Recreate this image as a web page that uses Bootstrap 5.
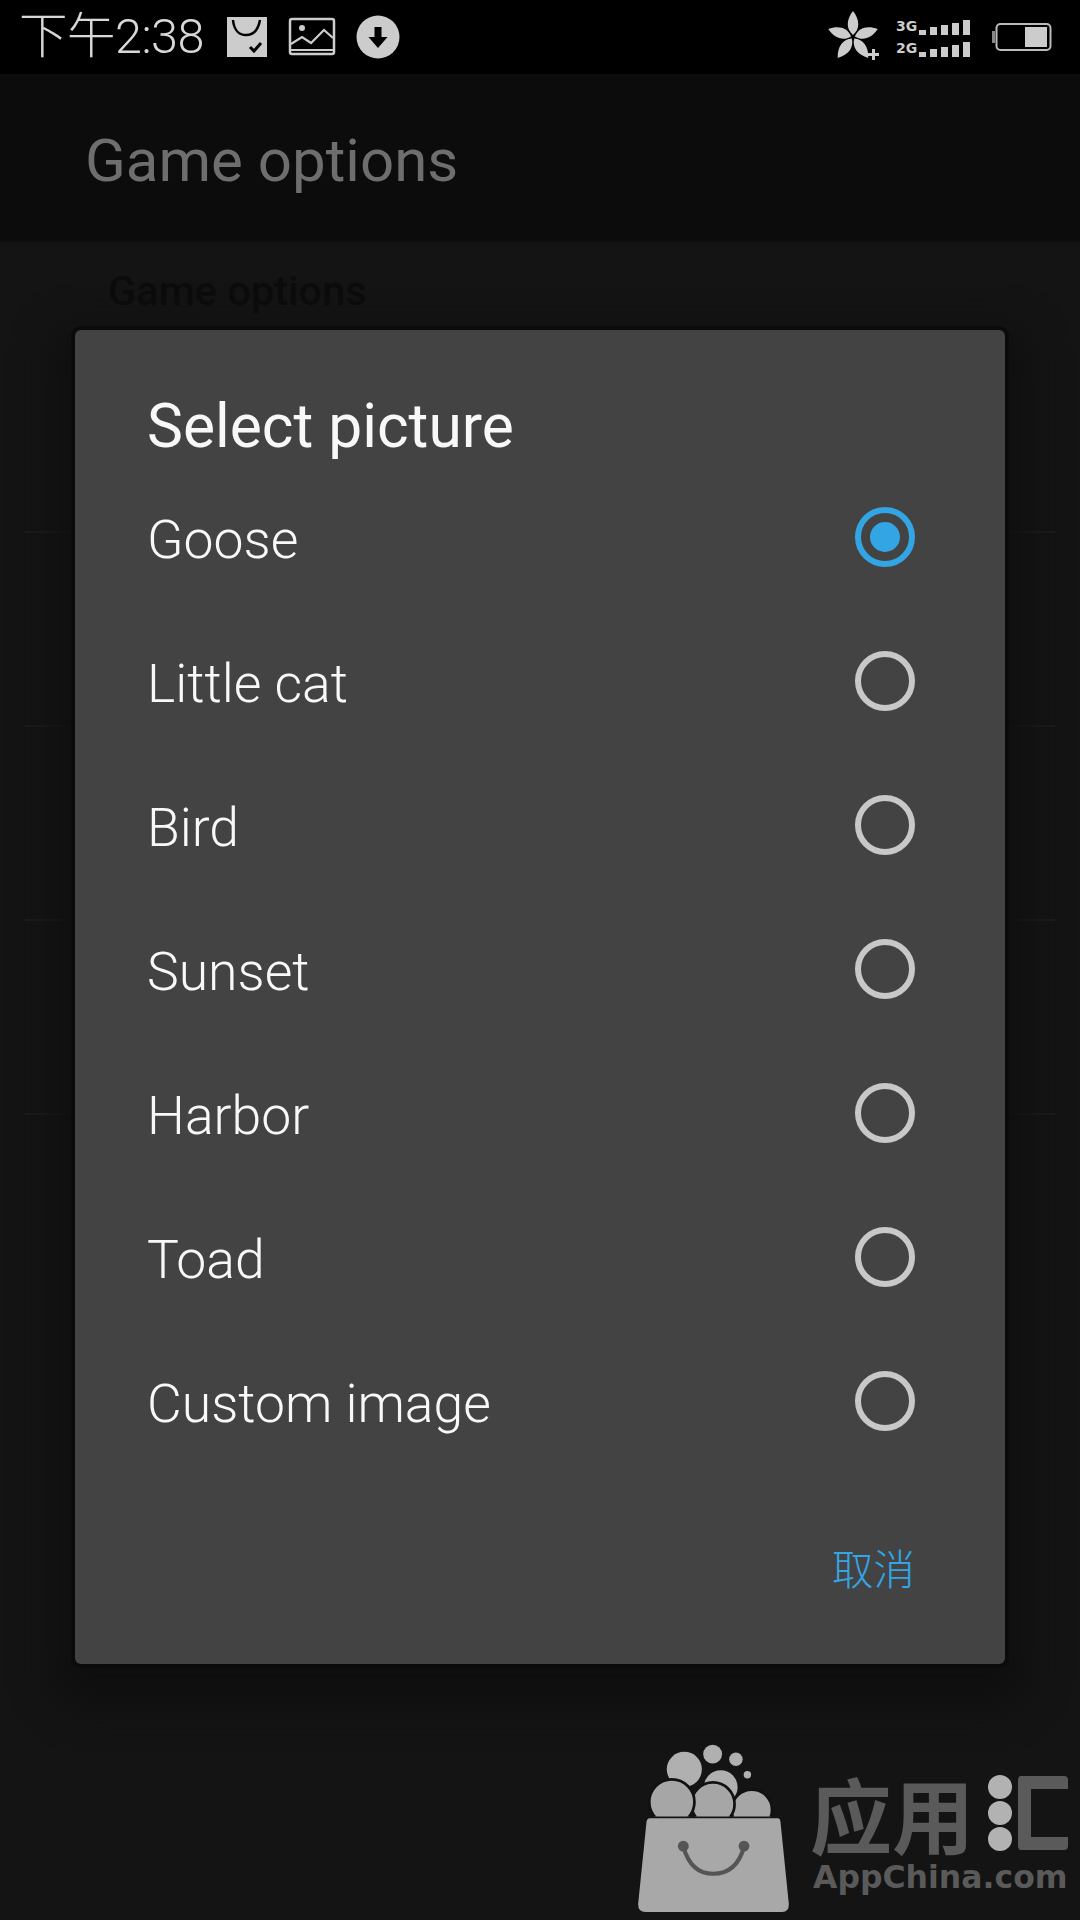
<!DOCTYPE html>
<html lang="en">
<head>
<meta charset="utf-8">
<title>Game options</title>
<link href="https://cdn.jsdelivr.net/npm/bootstrap@5.3.0/dist/css/bootstrap.min.css" rel="stylesheet">
<style>
html,body{margin:0;padding:0;background:#141414;}
.stage{position:relative;width:1080px;height:1920px;overflow:hidden;background:#141414;font-family:Roboto,"Noto Sans CJK SC",sans-serif;}
.statbar{height:74px;background:#000;padding:0 28px 0 19px;}
.clock{font-size:48.500px;line-height:74px;font-weight:300;color:#d8d8d8;font-family:Roboto,"Noto Sans CJK SC",sans-serif;letter-spacing:-.5px;margin-right:22px;}
.gap-l{gap:20px;}
.netlab{font-family:"DejaVu Sans",sans-serif;font-weight:700;font-size:14px;line-height:17px;color:#ccc;width:23px;}
.sig{gap:4px;align-items:flex-end;height:18px;}
.sig i{display:block;width:7px;background:#ccc;}
.netcol{margin-right:22px;}
.appbar{height:168px;background:#0c0c0c;padding:6px 0 0 85px;}
.appbar-title{font-size:60px;color:#6e6e6e;font-weight:400;}
.under-head{height:289px;padding:28px 0 0 108px;}
.under-title{font-size:41.500px;font-weight:500;color:#0c0c0c;line-height:42px;}
.under-row{height:194px;margin:0 24px;border-top:2px solid #1c1c1c;}
.dlg{position:absolute;left:75px;top:330px;width:930px;height:1334px;background:#434343;border-radius:6px;box-shadow:0 0 0 4px #0b0b0b,0 20px 40px 20px #0f0f0f;color:#fff;}
.dlg-head{height:135px;padding:64px 0 0 72px;}
.dlg-title{font-size:60.500px;font-weight:400;line-height:66px;color:#f8f8f8;}
.opt{height:144px;padding:0 90px 0 72px;}
.opt-label{font-size:53.500px;font-weight:300;color:#f8f8f8;line-height:1;position:relative;top:3px;}
.radio-o{width:60px;height:60px;border-radius:50%;border:6px solid #c8c8c8;flex:none;}
.radio-o.on{border-color:#33a5e5;}
.radio-o.on::after{content:"";display:block;width:30px;height:30px;margin:9px;border-radius:50%;background:#33a5e5;}
.dlg-foot{height:191px;padding:0 90px 2px 0;}
.cancel-t{font-size:41.500px;color:#33a5e5;font-family:"Noto Sans CJK SC",sans-serif;line-height:1;font-weight:300;}
.wm{position:absolute;left:638px;top:1744px;width:442px;height:176px;gap:20px;}
.wm-cn{font-family:"Noto Sans CJK SC",sans-serif;font-weight:700;font-size:82px;line-height:82px;color:#5a5a5a;white-space:nowrap;}
.wm-dots{gap:2px;margin:0 6px 0 14px;}
.wm-dots i{display:block;width:24px;height:24px;border-radius:50%;background:#b2b2b2;}
.wm-box{display:block;width:50px;height:74px;border:13px solid #5a5a5a;border-right:0;border-radius:4px;}
.wm-en{font-family:"DejaVu Sans",sans-serif;font-weight:700;font-size:31.500px;line-height:36px;color:#5a5a5a;white-space:nowrap;margin:5px 0 0 3px;}
.wm-col{padding-top:28px;}
</style>
</head>
<body>
<div class="stage">
  <div class="statbar d-flex align-items-center justify-content-between">
    <div class="d-flex align-items-center">
      <span class="clock">下午2:38</span>
      <div class="d-flex align-items-center gap-l">
        <svg width="42" height="42" viewBox="0 0 42 42"><rect x="1" y="1" width="40" height="40" fill="#ccc"/><path d="M7 4c1 11 7 15 13 15s12-4 14-15" fill="none" stroke="#000" stroke-width="2.500"/><path d="M24 31l4 4 7-8" fill="none" stroke="#000" stroke-width="3"/></svg>
        <svg width="48" height="40" viewBox="0 0 48 40"><rect x="2" y="2" width="44" height="35" rx="2" fill="none" stroke="#ccc" stroke-width="2.500"/><circle cx="14" cy="11" r="3" fill="#ccc"/><path d="M3 27l11-7 9 6 13-13 9 8M3 33h42" fill="none" stroke="#ccc" stroke-width="2.200"/></svg>
        <svg width="44" height="44" viewBox="0 0 44 44"><circle cx="22" cy="22" r="21.500" fill="#ccc"/><path d="M18.500 12h7v10h6L22 33 12.500 22h6z" fill="#000"/></svg>
      </div>
    </div>
    <div class="d-flex align-items-center">
      <svg width="54" height="54" viewBox="-27 -27 54 54" class="me-3">
        <defs><path id="leaf" d="M0-2C-7-8-7-17 0-26 7-17 7-8 0-2z"/></defs>
        <g fill="#ccc"><use href="#leaf"/><use href="#leaf" transform="rotate(72)"/><use href="#leaf" transform="rotate(144)"/><use href="#leaf" transform="rotate(216)"/><use href="#leaf" transform="rotate(288)"/><path d="M19 12h3v4h4v3h-4v4h-3v-4h-4v-3h4z"/></g>
      </svg>
      <div class="d-flex flex-column gap-1 netcol">
        <div class="d-flex align-items-center"><span class="netlab">3G</span><div class="d-flex sig"><i style="height:5px"></i><i style="height:8px"></i><i style="height:10px"></i><i style="height:12px"></i><i style="height:15px"></i></div></div>
        <div class="d-flex align-items-center"><span class="netlab">2G</span><div class="d-flex sig"><i style="height:5px"></i><i style="height:8px"></i><i style="height:10px"></i><i style="height:12px"></i><i style="height:15px"></i></div></div>
      </div>
      <svg width="60" height="30" viewBox="0 0 60 30"><rect x="0" y="9" width="3" height="12" fill="#888"/><rect x="4.500" y="2" width="54" height="26" rx="4" fill="none" stroke="#bbb" stroke-width="2"/><rect x="33" y="5" width="22" height="20" fill="#ccc"/></svg>
    </div>
  </div>

  <div class="appbar d-flex align-items-center"><span class="appbar-title">Game options</span></div>
  <div class="under-head"><span class="under-title">Game options</span></div>
  <div class="under-row"></div>
  <div class="under-row"></div>
  <div class="under-row"></div>
  <div class="under-row"></div>

  <div class="dlg d-flex flex-column">
    <div class="dlg-head"><div class="dlg-title">Select picture</div></div>
    <div class="opt d-flex align-items-center justify-content-between"><span class="opt-label">Goose</span><span class="radio-o on"></span></div>
    <div class="opt d-flex align-items-center justify-content-between"><span class="opt-label">Little cat</span><span class="radio-o"></span></div>
    <div class="opt d-flex align-items-center justify-content-between"><span class="opt-label">Bird</span><span class="radio-o"></span></div>
    <div class="opt d-flex align-items-center justify-content-between"><span class="opt-label">Sunset</span><span class="radio-o"></span></div>
    <div class="opt d-flex align-items-center justify-content-between"><span class="opt-label">Harbor</span><span class="radio-o"></span></div>
    <div class="opt d-flex align-items-center justify-content-between"><span class="opt-label">Toad</span><span class="radio-o"></span></div>
    <div class="opt d-flex align-items-center justify-content-between"><span class="opt-label">Custom image</span><span class="radio-o"></span></div>
    <div class="dlg-foot d-flex align-items-center justify-content-end"><span class="cancel-t">取消</span></div>
  </div>

  <div class="wm d-flex">
    <svg width="152" height="172" viewBox="113 190 450 510" class="flex-none">
      <defs><clipPath id="cut"><rect x="100" y="150" width="470" height="255"/></clipPath></defs>
      <g fill="#b0b0b0"><circle cx="250" cy="265" r="52"/><circle cx="334" cy="220" r="28"/><circle cx="403" cy="235" r="20"/><circle cx="437" cy="281" r="11"/><circle cx="358" cy="318" r="50"/></g>
      <g clip-path="url(#cut)" fill="#a6a6a6" stroke="#111" stroke-width="8"><circle cx="450" cy="385" r="60"/><circle cx="335" cy="368" r="64"/><circle cx="213" cy="362" r="67"/></g>
      <path d="M148 410H527Q534 410 535 420L560 665Q560 688 540 688H135Q113 688 113 665L138 420Q140 410 148 410z" fill="#a8a8a8"/>
      <path d="M247 495Q270 575 335 575Q405 575 427 495" fill="none" stroke="#555" stroke-width="12"/>
      <circle cx="247" cy="493" r="16" fill="#555"/><circle cx="427" cy="493" r="16" fill="#555"/>
    </svg>
    <div class="d-flex flex-column wm-col">
      <div class="d-flex align-items-center" aria-label="应用汇">
        <span class="wm-cn">应用</span>
        <span class="d-flex flex-column wm-dots"><i></i><i></i><i></i></span>
        <span class="wm-box"></span>
      </div>
      <span class="wm-en">AppChina.com</span>
    </div>
  </div>
</div>
<script src="https://cdn.jsdelivr.net/npm/bootstrap@5.3.0/dist/js/bootstrap.bundle.min.js"></script>
</body>
</html>
